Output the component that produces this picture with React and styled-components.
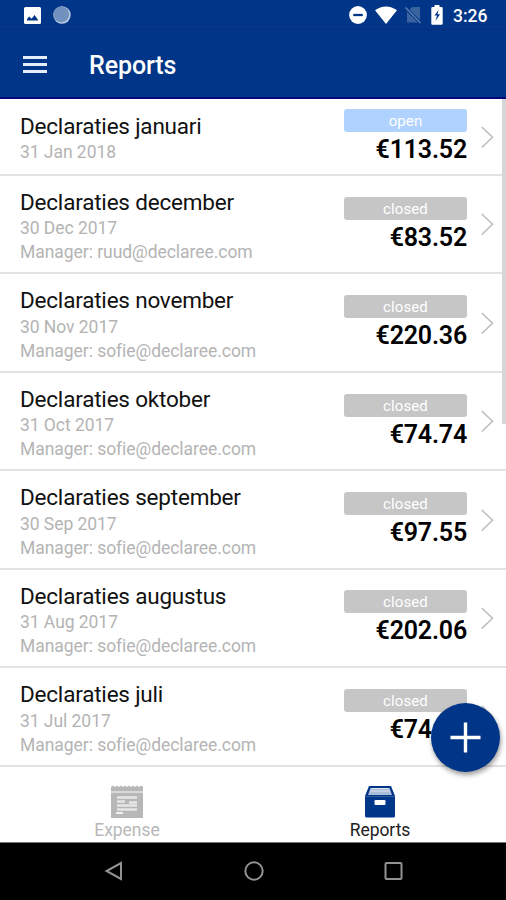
import React from 'react';
import styled, { createGlobalStyle } from 'styled-components';

const Global = createGlobalStyle`
  * { box-sizing: border-box; }
  html, body { margin: 0; padding: 0; background: #fff; }
  body { font-family: Roboto, sans-serif; overflow: hidden; }
  svg { display: block; flex: none; }
`;

const Screen = styled.div`
  position: relative;
  display: flex;
  flex-direction: column;
  width: 506px;
  height: 900px;
  overflow: hidden;
  background: #fff;
`;

const StatusBar = styled.div`
  display: flex;
  align-items: center;
  justify-content: space-between;
  height: 30px;
  flex: none;
  padding: 1px 18px 0 24px;
  background: #003587;
  border-bottom: 1px solid #042f78;
  color: #fff;
`;

const StatusGroup = styled.div`
  display: flex;
  align-items: center;
  gap: ${(p) => p.$gap}px;
`;

const Clock = styled.span`
  width: 35px;
  padding-top: 1px;
  font-size: 17.5px;
  font-weight: 500;
  line-height: 30px;
  white-space: nowrap;
`;

const Header = styled.header`
  display: flex;
  align-items: center;
  gap: 42px;
  height: 69px;
  flex: none;
  padding: 1px 23px 0;
  background: #003587;
  border-bottom: 2px solid #00087a;
`;

const HeaderTitle = styled.h1`
  margin: 4px 0 0;
  color: #fff;
  font-size: 25px;
  font-weight: 500;
  line-height: 30px;
  letter-spacing: -0.1px;
`;

const List = styled.div`
  position: relative;
  height: 668px;
  flex: none;
`;

const ScrollThumb = styled.div`
  position: absolute;
  top: 0;
  right: 0;
  width: 4px;
  height: 325px;
  background: #d6d6d6;
`;

const Row = styled.div`
  display: flex;
  justify-content: space-between;
  height: ${(p) => (p.$short ? 77 : 98.45)}px;
  padding: ${(p) => (p.$short ? 1 : 0)}px 12px 0 20px;
  border-bottom: 2px solid #e2e2e2;
`;

const Info = styled.div`
  padding-top: 13px;
`;

const Name = styled.div`
  color: #111;
  font-size: 22.5px;
  line-height: 27px;
  letter-spacing: -0.2px;
  white-space: nowrap;
`;

const Meta = styled.div`
  color: #b4b4b4;
  font-size: 17.5px;
  line-height: 24px;
  letter-spacing: -0.05px;
  white-space: nowrap;
`;

const MetaGroup = styled.div`
  padding-top: 0.4px;
`;

const Side = styled.div`
  display: flex;
  align-items: center;
  gap: 13px;
`;

const Totals = styled.div`
  display: flex;
  flex-direction: column;
  align-items: flex-end;
  gap: 1px;
  width: 123px;
  padding-top: ${(p) => (p.$short ? 0 : 2)}px;
`;

const Badge = styled.div`
  width: 123px;
  height: 23px;
  border-radius: 3px;
  background: ${(p) => (p.$open ? '#b0d2ff' : '#c6c6c6')};
  color: #fff;
  font-size: 15px;
  line-height: 25px;
  letter-spacing: 0.1px;
  text-align: center;
`;

const Amount = styled.div`
  color: #000;
  font-size: 25px;
  font-weight: 600;
  line-height: 33px;
  letter-spacing: -0.2px;
  white-space: nowrap;
`;

const Fab = styled.button`
  position: absolute;
  left: 431px;
  top: 703px;
  display: flex;
  align-items: center;
  justify-content: center;
  width: 69px;
  height: 69px;
  padding: 0;
  border: 0;
  border-radius: 50%;
  background: #003587;
  box-shadow: 1px 3px 5px rgba(0, 0, 0, 0.4);
`;

const Tabs = styled.nav`
  display: grid;
  grid-template-columns: 1fr 1fr;
  height: 75px;
  flex: none;
  background: #fff;
`;

const Tab = styled.div`
  display: flex;
  flex-direction: column;
  align-items: center;
  padding: 18px 0 0 1px;
  color: ${(p) => (p.$active ? '#222' : '#b8b8b8')};
  font-size: 17.5px;
  line-height: 25px;
  letter-spacing: -0.05px;
`;

const SystemNav = styled.div`
  display: flex;
  align-items: center;
  justify-content: space-between;
  height: 58px;
  flex: none;
  padding: 0 103px 2px 104px;
  background: #000;
  border-top: 1px solid #777;
`;

const rows = [
  ['januari', '31 Jan 2018', null, '€113.52'],
  ['december', '30 Dec 2017', 'ruud@declaree.com', '€83.52'],
  ['november', '30 Nov 2017', 'sofie@declaree.com', '€220.36'],
  ['oktober', '31 Oct 2017', 'sofie@declaree.com', '€74.74'],
  ['september', '30 Sep 2017', 'sofie@declaree.com', '€97.55'],
  ['augustus', '31 Aug 2017', 'sofie@declaree.com', '€202.06'],
  ['juli', '31 Jul 2017', 'sofie@declaree.com', '€74.74'],
];

const Chevron = () => (
  <svg width="14" height="24" viewBox="0 0 14 24" fill="none" stroke="#bcbcbc" strokeWidth="1.5">
    <path d="M1.800 2 12.500 12.300 1.800 22.500" />
  </svg>
);

const ReportRow = ({ month, date, manager, amount }) => (
  <Row $short={!manager}>
    <Info>
      <Name>Declaraties {month}</Name>
      <MetaGroup>
        <Meta>{date}</Meta>
        {manager && <Meta>Manager: {manager}</Meta>}
      </MetaGroup>
    </Info>
    <Side>
      <Totals $short={!manager}>
        <Badge $open={!manager}>{manager ? 'closed' : 'open'}</Badge>
        <Amount>{amount}</Amount>
      </Totals>
      <Chevron />
    </Side>
  </Row>
);

export default function App() {
  return (
    <Screen>
      <Global />
      <StatusBar>
        <StatusGroup $gap={12}>
          <svg width="17" height="17" viewBox="0 0 17 17">
            <rect width="17" height="17" rx="1.5" fill="#fff" />
            <path d="M3 13.5v-1.500l2.300-2.500 2.300 2.200 3-3.700 3.800 5.500z" fill="#003587" />
          </svg>
          <svg width="18" height="18" viewBox="0 0 18 18">
            <circle cx="9" cy="9" r="8.7" fill="#b9cbe4" />
            <circle cx="8.3" cy="8.3" r="7.9" fill="#7391bf" />
          </svg>
        </StatusGroup>
        <StatusGroup $gap={8}>
          <svg width="18" height="18" viewBox="0 0 19 19">
            <circle cx="9.5" cy="9.5" r="9.4" fill="#fff" />
            <rect x="4.5" y="8.3" width="10" height="2.4" fill="#003587" />
          </svg>
          <svg width="22" height="18" viewBox="0 0 22 18">
            <path d="M0 4.2C6.5-.9 15.5-.9 22 4.2L11 18z" fill="#fff" />
          </svg>
          <svg width="16" height="18" viewBox="0 0 16 18">
            <path d="M15 1v13L4.500 3.500 7 1zM2 5.500 13 16.500H2z" fill="#3a629e" />
            <path d="m.5 1.500 15 15.500" stroke="#5d7fb0" strokeWidth="1.400" />
          </svg>
          <svg width="16" height="20" viewBox="0 0 16 20">
            <path d="M3.500 2H5.500V0h5v2h2q1.200 0 1.200 1.200V18.500q0 1.200-1.200 1.200h-9q-1.200 0-1.200-1.200V3.200Q2.300 2 3.500 2z" fill="#fff" />
            <path d="m9.500 5-4 5.500H8L6.500 16 11 9.200H8.500z" fill="#003587" />
          </svg>
          <Clock>3:26</Clock>
        </StatusGroup>
      </StatusBar>
      <Header>
        <svg width="24" height="19" viewBox="0 0 24 19" fill="#e6edfa">
          <rect y="1" width="24" height="3" />
          <rect y="8" width="24" height="3" />
          <rect y="15" width="24" height="3" />
        </svg>
        <HeaderTitle>Reports</HeaderTitle>
      </Header>
      <List>
        {rows.map(([month, date, manager, amount]) => (
          <ReportRow key={month} month={month} date={date} manager={manager} amount={amount} />
        ))}
        <ScrollThumb />
      </List>
      <Tabs>
        <Tab>
          <svg width="32" height="33" viewBox="0 0 32 33">
            <path d="M0 2 2 .5 4 2 6 .5 8 2 10 .5 12 2 14 .5 16 2 18 .5 20 2 22 .5 24 2 26 .5 28 2 30 .5 32 2V33H0z" fill="#b7b7b7" />
            <path d="M0 7h32" stroke="#dadada" strokeWidth="2" />
            <path d="M6 12.500h20M6 16.500h8m4 1h8M6 20.500h20M6 24.500h20" stroke="#e6e6e6" strokeWidth="2.500" />
            <path d="M5 28h7" stroke="#f2f2f2" strokeWidth="2" />
          </svg>
          <span>Expense</span>
        </Tab>
        <Tab $active>
          <svg width="32" height="33" viewBox="0 0 32 33">
            <path d="M5 1h22l4 10v20q0 1.500-1.500 1.500h-27Q1 32.500 1 31V11z" fill="#003587" />
            <path d="M6.500 3h19l2.500 7H4z" fill="#a9bcd8" />
            <path d="M7.200 3.500h17.600M6 6h20" stroke="#dce5f1" strokeWidth="1" />
            <path d="M1 11.500h30" stroke="#315c9e" strokeWidth="1" />
            <rect x="10.500" y="15" width="11" height="5" rx="1" fill="#fff" />
          </svg>
          <span>Reports</span>
        </Tab>
      </Tabs>
      <SystemNav>
        <svg width="19" height="20" viewBox="0 0 19 20" fill="none" stroke="#929292" strokeWidth="2">
          <path d="M17 2v16L2.500 10z" />
        </svg>
        <svg width="20" height="20" viewBox="0 0 20 20" fill="none" stroke="#929292" strokeWidth="2">
          <circle cx="10" cy="10" r="8.700" />
        </svg>
        <svg width="19" height="18" viewBox="0 0 19 18" fill="none" stroke="#929292" strokeWidth="2">
          <rect x="1.500" y="1" width="16" height="16" rx="1" />
        </svg>
      </SystemNav>
      <Fab aria-label="Add report">
        <svg width="31" height="31" viewBox="0 0 31 31" stroke="#fff" strokeWidth="3.400">
          <path d="M15.500.5v30M.5 15.500h30" />
        </svg>
      </Fab>
    </Screen>
  );
}
